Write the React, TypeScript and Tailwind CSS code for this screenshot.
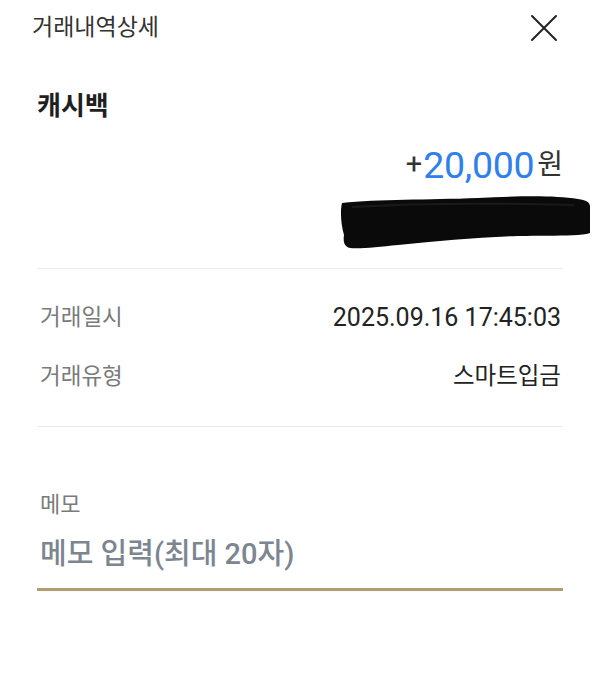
const font = { fontFamily: 'Roboto, "Noto Sans CJK KR", sans-serif' };

function CloseIcon() {
  return (
    <svg width="28" height="28" viewBox="0 0 28 28" fill="none">
      <path d="M2 2L26 26M26 2L2 26" stroke="#222" strokeWidth="2" strokeLinecap="round" />
    </svg>
  );
}

// redacted account info (hand-drawn black marker)
function Scribble() {
  return (
    <svg width="254" height="58" viewBox="0 0 254 58">
      <path
        d="M4 10 C40 6 90 7 140 5 C180 3 215 2 240 6 C248 7 252 9 252 14 L252 40 C240 44 210 42 180 43 C140 44 100 48 60 52 C40 54 22 56 12 55 C6 54 5 48 6 42 C3 32 2 18 4 10 Z"
        fill="#0a0a0a"
      />
      <path d="M14 14 C80 10 160 10 236 12" stroke="#333" strokeWidth="2" fill="none" opacity="0.4" />
    </svg>
  );
}

function InfoRow({ label, value, mono }: { label: string; value: string; mono?: boolean }) {
  return (
    <div className="flex h-[40px] items-center justify-between">
      <span className="text-[22.5px] text-[#7a7a7a] pl-[3px]">{label}</span>
      <span className={mono ? "text-[25px] text-[#222] pr-[2px]" : "text-[23.5px] text-[#222] pr-[2px]"}>{value}</span>
    </div>
  );
}

export default function App() {
  return (
    <div className="w-[600px] h-[692px] bg-white overflow-hidden" style={font}>
      {/* header */}
      <div className="flex h-[56px] items-center justify-between pl-[32px] pr-[42px]">
        <span className="text-[23px] text-[#333]">거래내역상세</span>
        <CloseIcon />
      </div>

      <div className="px-[37px]">
        {/* title */}
        <div className="mt-[34px] h-[32px] flex items-center text-[26px] font-bold text-[#1f1f1f]">
          캐시백
        </div>

        {/* amount */}
        <div className="mt-[21px] h-[44px] flex items-center justify-end">
          <span className="text-[29px] text-[#333] mr-[1px]">+</span>
          <span className="text-[37.5px] text-[#2f80ed] tracking-[-0.3px]">20,000</span>
          <span className="text-[28px] text-[#333] ml-[3px]">원</span>
        </div>

        <div className="mt-[6px] flex justify-end -mr-[29px]">
          <Scribble />
        </div>

        <div className="mt-[17px] h-[1px] bg-[#ececec]" />

        {/* details */}
        <div className="mt-[29px] flex flex-col gap-[19px]">
          <InfoRow label="거래일시" value="2025.09.16 17:45:03" mono />
          <InfoRow label="거래유형" value="스마트입금" />
        </div>

        <div className="mt-[29px] h-[1px] bg-[#ececec]" />

        {/* memo */}
        <div className="mt-[63px] h-[28px] flex items-center pl-[3px] text-[22px] text-[#7a7a7a]">
          메모
        </div>
        <div className="mt-[19px] h-[36px] flex items-center pl-[3px] text-[29px] font-medium text-[#7d8590]">
          메모 입력(최대 20자)
        </div>
        <div className="mt-[15px] h-[3px] bg-[#b39c6f]" />
      </div>
    </div>
  );
}
